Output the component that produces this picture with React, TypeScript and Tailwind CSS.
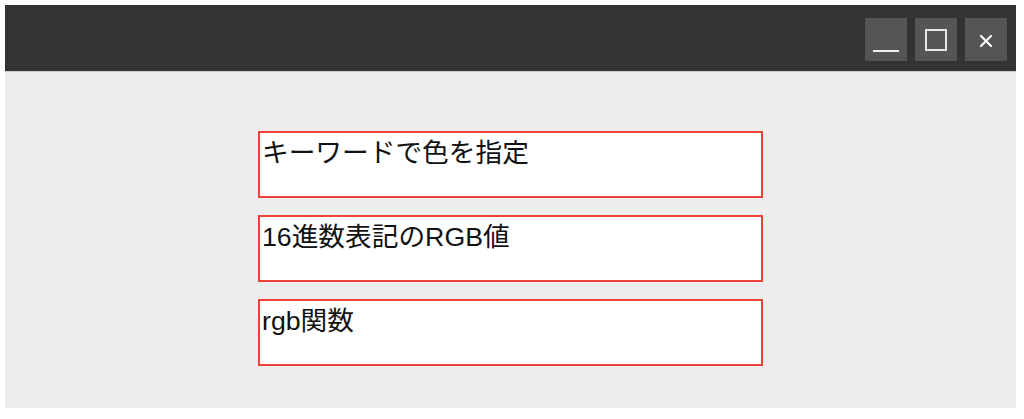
const items = ["キーワードで色を指定", "16進数表記のRGB値", "rgb関数"];

function WinButton({ children }: { children: React.ReactNode }) {
    return (
        <button className="flex h-[43px] w-[42px] items-center justify-center bg-[#555555] text-white">
            {children}
        </button>
    );
}

export default function App() {
    return (
        <div className="h-[419px] w-[1024px] bg-white pl-[5px] pt-[5px]" style={{ fontFamily: '"Liberation Sans", "Noto Sans CJK JP", sans-serif' }}>
            <div className="flex h-[403px] w-[1011px] flex-col bg-[#ededed]">
                <div className="flex h-[67px] items-start justify-end gap-2 border-b border-[#cfcfcf] bg-[#333333] pr-[9px] pt-[13px]">
                    <WinButton>
                        <span className="mt-[22px] block h-[2px] w-[26px] bg-[#f0f0f0]" />
                    </WinButton>
                    <WinButton>
                        <span className="block h-[22px] w-[22px] border-2 border-[#e8e8e8]" />
                    </WinButton>
                    <WinButton>
                        <svg width="14" height="14" viewBox="0 0 14 14" className="mt-[2px]">
                            <path d="M2 2L12 12M12 2L2 12" stroke="#ffffff" strokeWidth="2.2" strokeLinecap="round" />
                        </svg>
                    </WinButton>
                </div>
                <div className="flex flex-col items-center gap-[17px] pt-[59px]">
                    {items.map((label) => (
                        <div key={label} className="h-[67px] w-[505px] border-2 border-[#ec4237] bg-white pl-[2px] text-[26.7px] leading-[41px] text-[#111111]">
                            {label}
                        </div>
                    ))}
                </div>
            </div>
        </div>
    );
}
